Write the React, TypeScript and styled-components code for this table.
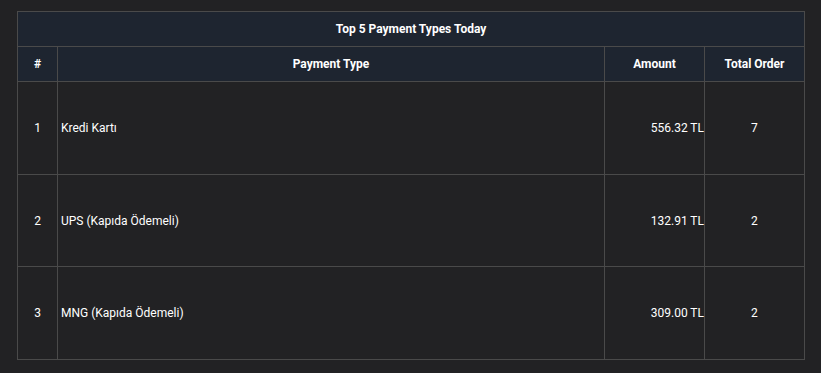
import React from "react";
import styled, { createGlobalStyle } from "styled-components";

const Global = createGlobalStyle`
  html, body { margin: 0; padding: 0; background: #222224; }
  body { font-family: Roboto, "Liberation Sans", sans-serif; color: #ffffff; }
`;

const Page = styled.div`
  padding: 11px 16px 0 17px;
`;

const Table = styled.table`
  width: 788px;
  border-collapse: collapse;
  font-size: 12px;
  table-layout: fixed;
`;

const Col = styled.col<{ $w?: number }>`
  ${(p) => (p.$w ? `width: ${p.$w}px;` : "")}
`;

const TitleCell = styled.th`
  background: #1e2530;
  border: 1px solid #4a4a4a;
  height: 34px;
  padding: 0;
  font-weight: 700;
  text-align: center;
`;

const HeadCell = styled.th`
  background: #1e2530;
  border: 1px solid #4a4a4a;
  height: 34px;
  padding: 0 4px;
  font-weight: 700;
  text-align: center;
`;

const Row = styled.tr<{ $h: number }>`
  height: ${(p) => p.$h}px;
`;

const Cell = styled.td<{ $align: "left" | "center" | "right" }>`
  border: 1px solid #4a4a4a;
  padding: ${(p) => (p.$align === "right" ? "0 0 0 4px" : "0 3px")};
  text-align: ${(p) => p.$align};
  vertical-align: middle;
  color: #ffffff;
`;

const rows = [
  { n: 1, type: "Kredi Kartı", amount: "556.32 TL", total: 7, h: 93 },
  { n: 2, type: "UPS (Kapıda Ödemeli)", amount: "132.91 TL", total: 2, h: 92 },
  { n: 3, type: "MNG (Kapıda Ödemeli)", amount: "309.00 TL", total: 2, h: 93 },
];

export default function App() {
  return (
    <>
      <Global />
      <Page>
        <Table>
          <colgroup>
            <Col $w={40} />
            <Col />
            <Col $w={100} />
            <Col $w={100} />
          </colgroup>
          <thead>
            <tr>
              <TitleCell colSpan={4}>Top 5 Payment Types Today</TitleCell>
            </tr>
            <tr>
              <HeadCell>#</HeadCell>
              <HeadCell>Payment Type</HeadCell>
              <HeadCell>Amount</HeadCell>
              <HeadCell>Total Order</HeadCell>
            </tr>
          </thead>
          <tbody>
            {rows.map((r) => (
              <Row key={r.n} $h={r.h}>
                <Cell $align="center">{r.n}</Cell>
                <Cell $align="left">{r.type}</Cell>
                <Cell $align="right">{r.amount}</Cell>
                <Cell $align="center">{r.total}</Cell>
              </Row>
            ))}
          </tbody>
        </Table>
      </Page>
    </>
  );
}
